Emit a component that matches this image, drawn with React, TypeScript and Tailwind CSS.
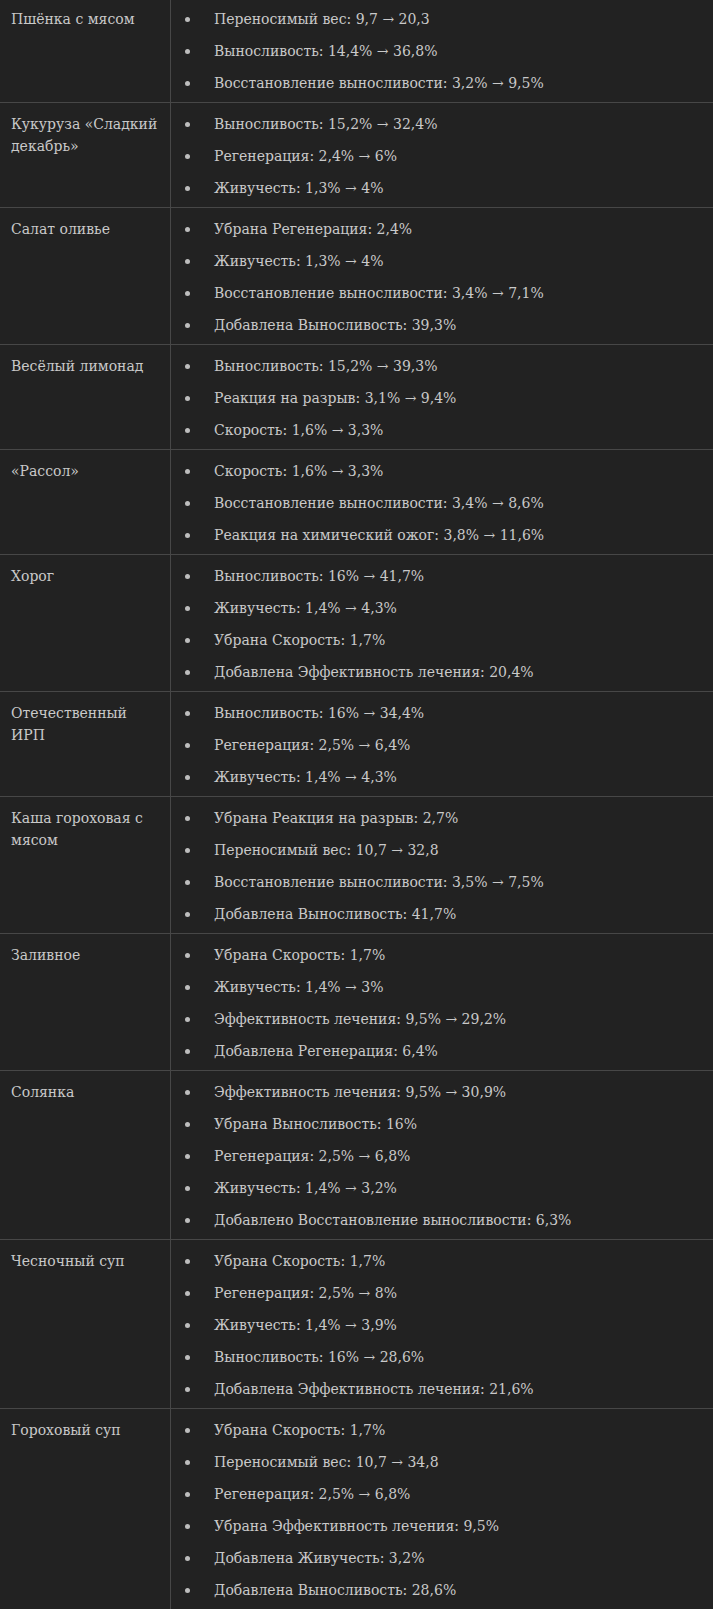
const rows: { name: string; items: string[] }[] = [
  {
    name: "Пшёнка с мясом",
    items: ["Переносимый вес: 9,7 → 20,3", "Выносливость: 14,4% → 36,8%", "Восстановление выносливости: 3,2% → 9,5%"],
  },
  {
    name: "Кукуруза «Сладкий декабрь»",
    items: ["Выносливость: 15,2% → 32,4%", "Регенерация: 2,4% → 6%", "Живучесть: 1,3% → 4%"],
  },
  {
    name: "Салат оливье",
    items: [
      "Убрана Регенерация: 2,4%",
      "Живучесть: 1,3% → 4%",
      "Восстановление выносливости: 3,4% → 7,1%",
      "Добавлена Выносливость: 39,3%",
    ],
  },
  {
    name: "Весёлый лимонад",
    items: ["Выносливость: 15,2% → 39,3%", "Реакция на разрыв: 3,1% → 9,4%", "Скорость: 1,6% → 3,3%"],
  },
  {
    name: "«Рассол»",
    items: ["Скорость: 1,6% → 3,3%", "Восстановление выносливости: 3,4% → 8,6%", "Реакция на химический ожог: 3,8% → 11,6%"],
  },
  {
    name: "Хорог",
    items: [
      "Выносливость: 16% → 41,7%",
      "Живучесть: 1,4% → 4,3%",
      "Убрана Скорость: 1,7%",
      "Добавлена Эффективность лечения: 20,4%",
    ],
  },
  {
    name: "Отечественный ИРП",
    items: ["Выносливость: 16% → 34,4%", "Регенерация: 2,5% → 6,4%", "Живучесть: 1,4% → 4,3%"],
  },
  {
    name: "Каша гороховая с мясом",
    items: [
      "Убрана Реакция на разрыв: 2,7%",
      "Переносимый вес: 10,7 → 32,8",
      "Восстановление выносливости: 3,5% → 7,5%",
      "Добавлена Выносливость: 41,7%",
    ],
  },
  {
    name: "Заливное",
    items: [
      "Убрана Скорость: 1,7%",
      "Живучесть: 1,4% → 3%",
      "Эффективность лечения: 9,5% → 29,2%",
      "Добавлена Регенерация: 6,4%",
    ],
  },
  {
    name: "Солянка",
    items: [
      "Эффективность лечения: 9,5% → 30,9%",
      "Убрана Выносливость: 16%",
      "Регенерация: 2,5% → 6,8%",
      "Живучесть: 1,4% → 3,2%",
      "Добавлено Восстановление выносливости: 6,3%",
    ],
  },
  {
    name: "Чесночный суп",
    items: [
      "Убрана Скорость: 1,7%",
      "Регенерация: 2,5% → 8%",
      "Живучесть: 1,4% → 3,9%",
      "Выносливость: 16% → 28,6%",
      "Добавлена Эффективность лечения: 21,6%",
    ],
  },
  {
    name: "Гороховый суп",
    items: [
      "Убрана Скорость: 1,7%",
      "Переносимый вес: 10,7 → 34,8",
      "Регенерация: 2,5% → 6,8%",
      "Убрана Эффективность лечения: 9,5%",
      "Добавлена Живучесть: 3,2%",
      "Добавлена Выносливость: 28,6%",
    ],
  },
];

export default function App() {
  return (
    <div
      className="min-h-screen w-full bg-[#222222] text-[#c9c9c9] text-[14px] leading-[22px]"
      style={{ fontFamily: '"DejaVu Serif", "Liberation Serif", serif' }}
    >
      {rows.map((row, i) => (
        <div key={i} className={`flex ${i === 0 ? "" : "border-t border-[#474747]"}`}>
          {/* Название блюда */}
          <div className={`w-[171px] shrink-0 border-r border-[#474747] pl-[11px] pr-[10px] pb-2 ${i === 0 ? "pt-2" : "pt-[10px]"}`}>
            {row.name}
          </div>
          {/* Изменения */}
          <ul className={`flex flex-1 flex-col gap-[10px] pb-2 ${i === 0 ? "pt-2" : "pt-[10px]"}`}>
            {row.items.map((item, j) => (
              <li key={j} className="flex items-center">
                <span className="ml-[14px] mr-[24px] h-[5px] w-[5px] shrink-0 rounded-full bg-[#bdbdbd]" />
                <span>{item}</span>
              </li>
            ))}
          </ul>
        </div>
      ))}
    </div>
  );
}
